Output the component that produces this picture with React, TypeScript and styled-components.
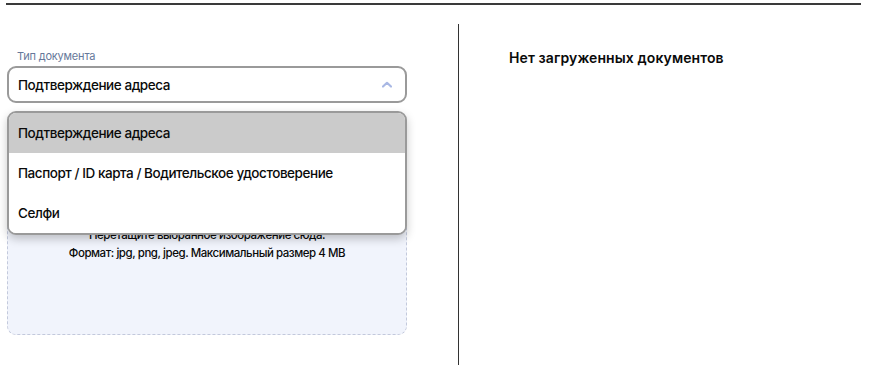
import React from "react";
import styled, { createGlobalStyle } from "styled-components";

const Global = createGlobalStyle`
  html, body { margin: 0; padding: 0; background: #fff; }
  body { font-family: Inter, "Noto Sans", sans-serif; color: #0a0a0a; }
`;

const TopRule = styled.div`
  height: 2px;
  width: 855px;
  margin: 3px 0 0 6px;
  background: #3a3a3a;
`;

const Main = styled.div`
  display: flex;
  padding-top: 19px;
`;

const LeftCol = styled.div`
  width: 400px;
  margin-left: 7px;
  padding-top: 26px;
  display: flex;
  flex-direction: column;
`;

const Divider = styled.div`
  width: 1px;
  height: 341px;
  margin-left: 51px;
  background: #333;
`;

const RightCol = styled.div`
  padding-left: 50px;
  padding-top: 25px;
`;

const EmptyText = styled.div`
  font-size: 14px;
  font-weight: 600;
  letter-spacing: 0.1px;
`;

const Label = styled.div`
  font-size: 11px;
  line-height: 12px;
  color: #66789a;
  padding-left: 10px;
  margin-bottom: 4px;
  letter-spacing: -0.2px;
`;

const Field = styled.div`
  position: relative;
`;

const SelectBox = styled.div`
  height: 33px;
  border: 2px solid #9a9a9a;
  border-radius: 9px;
  display: flex;
  align-items: center;
  justify-content: space-between;
  padding: 0 13px 0 9px;
  font-size: 13.5px;
  font-weight: 550;
  letter-spacing: -0.45px;
`;

const Menu = styled.div`
  position: absolute;
  top: 45px;
  left: 0;
  right: 0;
  background: #fff;
  border: 2px solid #9a9a9a;
  border-radius: 9px;
  overflow: hidden;
  box-shadow: 0 4px 10px rgba(0, 0, 0, 0.22);
  z-index: 2;
`;

const Option = styled.div<{ $active?: boolean }>`
  height: 40px;
  display: flex;
  align-items: center;
  padding-left: 9px;
  font-size: 13.5px;
  font-weight: 550;
  letter-spacing: -0.45px;
  background: ${(p) => (p.$active ? "#cbcbcb" : "#fff")};
`;

const DropZone = styled.div`
  margin-top: 16px;
  height: 216px;
  border: 1px dashed #c3c9dc;
  border-radius: 9px;
  background: #f1f4fc;
  display: flex;
  flex-direction: column;
  align-items: center;
  justify-content: flex-end;
  padding-bottom: 72px;
  box-sizing: border-box;
  font-size: 11.5px;
  font-weight: 550;
  letter-spacing: -0.45px;
  line-height: 18px;
  text-align: center;
`;

const Chevron = () => (
  <svg width="10" height="7" viewBox="0 0 10 7">
    <path d="M1 5.5 L5 1.8 L9 5.5" fill="none" stroke="#a9b8e4" strokeWidth="2.2" strokeLinecap="round" strokeLinejoin="round" />
  </svg>
);

export default function App() {
  return (
    <>
      <Global />
      <TopRule />
      <Main>
        <LeftCol>
          <Label>Тип документа</Label>
          <Field>
            <SelectBox>
              <span>Подтверждение адреса</span>
              <Chevron />
            </SelectBox>
            <Menu>
              <Option $active>Подтверждение адреса</Option>
              <Option>Паспорт / ID карта / Водительское удостоверение</Option>
              <Option>Селфи</Option>
            </Menu>
          </Field>
          <DropZone>
            <div>Перетащите выбранное изображение сюда.</div>
            <div>Формат: jpg, png, jpeg. Максимальный размер 4 MB</div>
          </DropZone>
        </LeftCol>
        <Divider />
        <RightCol>
          <EmptyText>Нет загруженных документов</EmptyText>
        </RightCol>
      </Main>
    </>
  );
}
